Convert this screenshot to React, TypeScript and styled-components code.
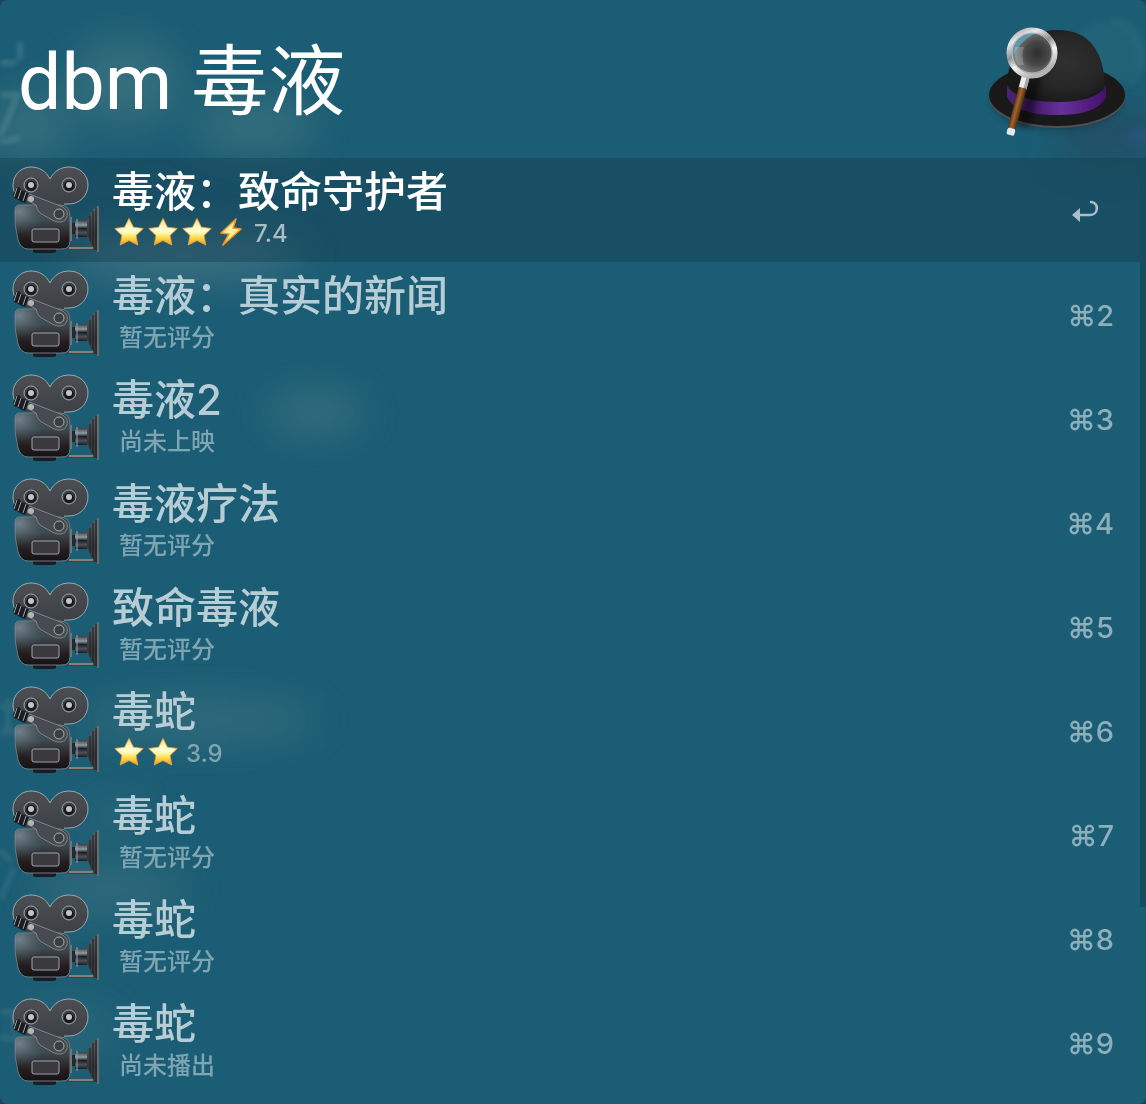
import React, { useState } from "react";
import styled, { createGlobalStyle } from "styled-components";

const GlobalStyle = createGlobalStyle`
  *, *::before, *::after { box-sizing: border-box; }
  body { margin: 0; background: #1e4556; }
`;

const Panel = styled.main`
  position: relative;
  isolation: isolate;
  display: flex;
  flex-direction: column;
  min-height: 100vh;
  padding-bottom: 10px;
  overflow: hidden;
  border-radius: 8px;
  font-family: Inter, "Noto Sans CJK SC", "DejaVu Sans", sans-serif;
  color: #fff;
  background: #1b5d74;
`;

const BackdropLeft = styled.svg`
  position: absolute;
  z-index: -1;
  top: 0;
  left: 0;
  width: 500px;
  height: 1104px;
`;

const BackdropRight = styled.svg`
  position: absolute;
  z-index: -1;
  top: 0;
  right: 0;
  width: 240px;
  height: 260px;
`;

const SearchBar = styled.header`
  display: flex;
  align-items: center;
  justify-content: space-between;
  height: 158px;
  padding: 0 20px 0 18px;
`;

const SearchInput = styled.input`
  flex: 1;
  min-width: 0;
  height: 120px;
  padding: 0 0 8px;
  border: 0;
  outline: 0;
  background: transparent;
  color: #fff;
  font-family: Roboto, "Noto Sans CJK SC", sans-serif;
  font-size: 77px;
  font-weight: 400;
`;

const HatSvg = styled.svg`
  flex: none;
  width: 140px;
  height: 116px;
`;

const ResultArea = styled.section`
  display: flex;
`;

const Results = styled.ul`
  display: flex;
  flex: 1;
  flex-direction: column;
  margin: 0;
  padding: 0;
  list-style: none;
`;

const ScrollTrack = styled.div`
  display: grid;
  grid-template-rows: 4fr 1fr;
  width: 6px;
`;

const ScrollThumb = styled.div`
  background: #174c60;
`;

const Row = styled.button<{ $selected: boolean }>`
  display: flex;
  align-items: center;
  width: 100%;
  height: 104px;
  padding: 0 26px 0 12px;
  gap: 12px;
  border: 0;
  text-align: left;
  font-family: inherit;
  cursor: pointer;
  color: ${(p) => (p.$selected ? "#fff" : "#b7cdd5")};
  background: ${(p) => (p.$selected ? "rgba(20, 56, 72, 0.36)" : "transparent")};
`;

const CameraSvg = styled.svg`
  flex: none;
  width: 88px;
  height: 88px;
`;

const Texts = styled.span`
  display: flex;
  flex: 1;
  flex-direction: column;
  min-width: 0;
`;

const Title = styled.span`
  font-size: 42px;
  font-weight: 500;
  line-height: 48px;
  white-space: nowrap;
`;

const Subtitle = styled.span<{ $selected: boolean }>`
  display: flex;
  align-items: center;
  height: 36px;
  font-size: 24px;
  font-weight: 500;
  line-height: 36px;
  white-space: nowrap;
  color: ${(p) => (p.$selected ? "#a9bdc5" : "#7fa5b2")};
`;

const Stars = styled.span`
  display: flex;
  gap: 4px;
  padding: 0 8px 4px 2px;
`;

const Note = styled.span`
  padding-left: 7px;
`;

const GlyphSvg = styled.svg`
  width: 30px;
  height: 30px;
`;

const Shortcut = styled.kbd`
  padding-top: 4px;
  font-family: Inter, "DejaVu Sans", sans-serif;
  font-size: 29px;
  font-weight: 500;
  line-height: 36px;
  color: #8dafbb;
`;

const ReturnSvg = styled.svg`
  width: 28px;
  height: 24px;
  margin-right: 14px;
`;

function Backdrop() {
  return (
    <>
      <BackdropLeft viewBox="0 0 500 1104" aria-hidden="true">
        <defs>
          <filter id="haze" filterUnits="userSpaceOnUse" x="-100" y="-100" width="700" height="1304">
            <feGaussianBlur stdDeviation="20" />
          </filter>
          <filter id="soft" filterUnits="userSpaceOnUse" x="-20" y="0" width="100" height="1104">
            <feGaussianBlur stdDeviation="2" />
          </filter>
        </defs>
        <g fill="#6f9493" opacity="0.32" filter="url(#haze)">
          <ellipse cx="125" cy="82" rx="56" ry="44" />
          <ellipse cx="30" cy="125" rx="40" ry="34" />
          <ellipse cx="255" cy="125" rx="62" ry="28" />
          <ellipse cx="315" cy="413" rx="50" ry="22" />
          <ellipse cx="200" cy="720" rx="120" ry="24" opacity="0.8" />
          <ellipse cx="115" cy="815" rx="40" ry="20" opacity="0.5" />
          <ellipse cx="110" cy="890" rx="80" ry="24" opacity="0.8" />
          <ellipse cx="70" cy="1030" rx="50" ry="30" opacity="0.5" />
        </g>
        <g fill="#80949f" opacity="0.38" filter="url(#haze)">
          <ellipse cx="185" cy="256" rx="120" ry="22" />
        </g>
        <g fill="none" stroke="#7fa5ac" strokeWidth="6" opacity="0.28" filter="url(#soft)">
          <path d="M0 63H16M20 42V60M0 95H18L0 136M0 142L20 138" />
          <path d="M0 707H14M8 698V730M0 732H18" opacity="0.6" />
          <path d="M0 850L12 862M14 868L0 900" opacity="0.6" />
          <path d="M0 1012H14V1030M0 1038H20" opacity="0.6" />
        </g>
      </BackdropLeft>
      <BackdropRight viewBox="0 0 240 260" aria-hidden="true">
        <defs>
          <filter id="hazeRight" x="-100%" y="-100%" width="300%" height="300%">
            <feGaussianBlur stdDeviation="18" />
          </filter>
          <filter id="softRight" x="-50%" y="-50%" width="200%" height="200%">
            <feGaussianBlur stdDeviation="4" />
          </filter>
        </defs>
        <ellipse cx="205" cy="135" rx="60" ry="28" fill="#26465d" opacity="0.6" filter="url(#hazeRight)" />
        <ellipse cx="240" cy="137" rx="22" ry="8" fill="#2f5587" opacity="0.55" filter="url(#softRight)" />
        <circle cx="202" cy="54" r="34" fill="#2b6a7c" opacity="0.45" filter="url(#softRight)" />
        <path d="M208 20c34 6 32 54 16 64" fill="none" stroke="#4d8592" strokeWidth="4" opacity="0.4" filter="url(#softRight)" />
      </BackdropRight>
    </>
  );
}

function Hat() {
  return (
    <HatSvg viewBox="0 0 140 116" role="img" aria-label="Alfred">
      <defs>
        <radialGradient id="dome" cx="0.6" cy="0.45" r="0.6">
          <stop offset="0" stopColor="#303030" />
          <stop offset="0.6" stopColor="#262626" />
          <stop offset="1" stopColor="#171717" />
        </radialGradient>
        <linearGradient id="ribbon" x1="0" x2="1">
          <stop offset="0" stopColor="#4a2270" />
          <stop offset="0.25" stopColor="#42196a" />
          <stop offset="0.55" stopColor="#67309a" />
          <stop offset="1" stopColor="#43106a" />
        </linearGradient>
        <linearGradient id="ring" x1="0" y1="0" x2="0.5" y2="1">
          <stop offset="0" stopColor="#9a9a9a" />
          <stop offset="0.25" stopColor="#e8e8e8" />
          <stop offset="0.5" stopColor="#8f8f8f" />
          <stop offset="0.7" stopColor="#f2f2f2" />
          <stop offset="1" stopColor="#b5b5b5" />
        </linearGradient>
        <radialGradient id="glass" cx="0.62" cy="0.5" r="0.55">
          <stop offset="0" stopColor="#2e2e2e" />
          <stop offset="0.5" stopColor="#484848" />
          <stop offset="1" stopColor="#808586" />
        </radialGradient>
        <linearGradient id="wood" x1="0" x2="1">
          <stop offset="0" stopColor="#5c3414" />
          <stop offset="0.4" stopColor="#a0662f" />
          <stop offset="1" stopColor="#4f2a0e" />
        </linearGradient>
        <filter id="shade" x="-30%" y="-30%" width="160%" height="160%">
          <feGaussianBlur stdDeviation="3" />
        </filter>
      </defs>
      <ellipse cx="71" cy="79" rx="66" ry="30" fill="#123542" opacity="0.6" filter="url(#shade)" />
      <ellipse cx="71" cy="76" rx="68" ry="31" fill="#505050" />
      <ellipse cx="71" cy="74" rx="68" ry="31" fill="#191919" />
      <path d="M21 66C22 30 40 9 72 9c30 0 46 20 47 57Q71 98 21 66z" fill="url(#dome)" />
      <path d="M21 64Q30 81 71 81T120 64V76Q112 94 71 94T21 76z" fill="url(#ribbon)" />
      <path d="M56 54L44 106 30 104 44 56z" fill="#000" opacity="0.45" filter="url(#shade)" />
      <g transform="rotate(15 46 32)">
        <rect x="42" y="56" width="8" height="13" fill="#ececec" />
        <rect x="47" y="56" width="3" height="13" fill="#a4a4a4" />
        <rect x="42" y="68" width="8" height="42" fill="url(#wood)" />
        <rect x="42" y="110" width="8" height="7" rx="2" fill="#e6e6e6" />
      </g>
      <circle cx="46" cy="32" r="22" fill="url(#glass)" />
      <path d="M27 35C25 20 36 11 52 11 42 16 33 22 27 35z" fill="#5f9aab" />
      <path d="M29 26h9q-3 8 0 18h-6q-5-9-3-18z" fill="#fff" opacity="0.2" />
      <circle cx="46" cy="32" r="23" fill="none" stroke="url(#ring)" strokeWidth="5" />
      <circle cx="46" cy="32" r="20" fill="none" stroke="#fff" strokeWidth="1" opacity="0.5" />
    </HatSvg>
  );
}

function Camera() {
  return (
    <CameraSvg viewBox="0 0 88 88" aria-hidden="true">
      <defs>
        <linearGradient id="body" x1="0" y1="0" x2="0" y2="1">
          <stop offset="0" stopColor="#3d464d" />
          <stop offset="0.35" stopColor="#3e4950" />
          <stop offset="0.75" stopColor="#241d1f" />
          <stop offset="1" stopColor="#151214" />
        </linearGradient>
        <radialGradient id="sheen" cx="0.08" cy="0.15" r="0.5">
          <stop offset="0" stopColor="#8799a2" stopOpacity="0.75" />
          <stop offset="1" stopColor="#566871" stopOpacity="0" />
        </radialGradient>
        <linearGradient id="reel" x1="0" y1="0" x2="0" y2="1">
          <stop offset="0" stopColor="#4b4e53" />
          <stop offset="1" stopColor="#3b3e43" />
        </linearGradient>
        <linearGradient id="lens" x1="0" y1="0" x2="0" y2="1">
          <stop offset="0" stopColor="#3b3e43" />
          <stop offset="0.3" stopColor="#8f9aa4" />
          <stop offset="0.5" stopColor="#1c1e23" />
          <stop offset="0.75" stopColor="#4a525c" />
          <stop offset="1" stopColor="#1c1a1c" />
        </linearGradient>
        <linearGradient id="hood" x1="0" y1="0" x2="0" y2="1">
          <stop offset="0" stopColor="#5a5e63" />
          <stop offset="0.6" stopColor="#37393d" />
          <stop offset="1" stopColor="#463a3a" />
        </linearGradient>
      </defs>
      <path d="M19 1c8 0 15 4 19 12C42 5 49 1 57 1c11 0 19 8 19 18S68 38 57 38h-5v5H28L12 36C5 33 1 27 1 19 1 9 9 1 19 1z" fill="url(#reel)" />
      <path d="M4 29C2 26 1 23 1 19 1 9 9 1 19 1c8 0 15 4 19 12C42 5 49 1 57 1c11 0 19 8 19 18S68 38 57 38h-5" fill="none" stroke="#9ba9b0" strokeWidth="1" />
      {[19, 57].map((x) => (
        <g key={x}>
          <circle cx={x} cy="19" r="7" fill="#3a3c40" stroke="#a1a8ad" strokeWidth="1" />
          <circle cx={x} cy="20" r="5" fill="#17181a" />
          <circle cx={x} cy="19" r="3" fill="#c3c6c8" />
        </g>
      ))}
      <path d="M57 81h29v3H55z" fill="#4c3c3e" />
      <path d="M57 82h28" stroke="#d0b9ba" strokeWidth="1" />
      <path d="M57 51h3v24h-3z" fill="#6d757b" />
      <path d="M60 57h4v11h-4z" fill="#24272b" />
      <rect x="63" y="54" width="12" height="17" rx="1" fill="url(#lens)" />
      <path d="M65 53v20" stroke="#9aa3aa" strokeWidth="1" />
      <path d="M75 54l3-4v-3l3-2v-2l6-3v46l-6-3v-3l-3-2v-4l-3-4z" fill="url(#hood)" />
      <path d="M78 50v25M81 45v35M84 42v42" stroke="#1b1d20" strokeWidth="1" />
      <path d="M86 40v46" stroke="#686c70" strokeWidth="2" />
      <path d="M21 82h23v4l-2 1H23l-2-1z" fill="#1b1c1f" />
      <path d="M8 39h40q10 0 10 11v25q0 8-8 8H16q-7 0-10-9Q2 59 3 44q0-5 5-5z" fill="url(#body)" stroke="#6d7a82" strokeWidth="1" />
      <path d="M8 39h40q10 0 10 11v25q0 8-8 8H16q-7 0-10-9Q2 59 3 44q0-5 5-5z" fill="url(#sheen)" />
      <rect x="20" y="63" width="27" height="13" rx="2" fill="#39393e" stroke="#a0a3a7" strokeWidth="1" />
      <path d="M17 28l34 13q7 5 3 12-4 5-12 2L28 47q-3-3-4-8l-9-5z" fill="#474a4f" stroke="#7d848a" strokeWidth="1" />
      <circle cx="47" cy="48" r="5" fill="#3a3d42" stroke="#a7adb1" strokeWidth="1" />
      <path d="M4 22l3-1 2 3 4 1 4 3-4 9-5-2-3-2-3-1-1-3z" fill="#1a1c20" />
      <path d="M5 22L2 31M9 24l-3 9M14 26l-3 9" stroke="#98a0a6" strokeWidth="1" />
      <circle cx="19" cy="33" r="3" fill="#b3b7ba" />
    </CameraSvg>
  );
}

function Star() {
  return (
    <GlyphSvg viewBox="0 0 30 30" aria-hidden="true">
      <defs>
        <linearGradient id="gold" x1="0" y1="0" x2="0" y2="1">
          <stop offset="0" stopColor="#fbd477" />
          <stop offset="0.3" stopColor="#fff7c4" />
          <stop offset="0.5" stopColor="#fffcd0" />
          <stop offset="0.7" stopColor="#ffe052" />
          <stop offset="1" stopColor="#f09a1c" />
        </linearGradient>
      </defs>
      <path d="M15 1.4L19.4 10.2 29.2 11.5 22 18.4 23.8 28 15 23.6 6.2 28 8 18.4 0.8 11.5 10.6 10.2z" fill="url(#gold)" stroke="#f0ab38" strokeWidth="0.8" strokeLinejoin="round" />
    </GlyphSvg>
  );
}

function Bolt() {
  return (
    <GlyphSvg viewBox="0 0 30 30" aria-hidden="true">
      <path d="M20 2L5 16l8 1L7 28 25 12l-8-1z" fill="#fff0a0" stroke="#f39a20" strokeWidth="1.6" strokeLinejoin="round" />
    </GlyphSvg>
  );
}

function ReturnArrow() {
  return (
    <ReturnSvg viewBox="0 0 28 24" role="img" aria-label="Return">
      <path d="M18 4h1c8 0 8 13-1 13H7" fill="none" stroke="#a9c0c9" strokeWidth="2.6" />
      <path d="M0 17l8-7v14z" fill="#a9c0c9" />
    </ReturnSvg>
  );
}

type Item = { title: string; note?: string; stars?: number; half?: boolean; score?: string };

const items: Item[] = [
  { title: "毒液：致命守护者", stars: 3, half: true, score: "7.4" },
  { title: "毒液：真实的新闻", note: "暂无评分" },
  { title: "毒液2", note: "尚未上映" },
  { title: "毒液疗法", note: "暂无评分" },
  { title: "致命毒液", note: "暂无评分" },
  { title: "毒蛇", stars: 2, score: "3.9" },
  { title: "毒蛇", note: "暂无评分" },
  { title: "毒蛇", note: "暂无评分" },
  { title: "毒蛇", note: "尚未播出" },
];

export default function App() {
  const [query, setQuery] = useState("dbm 毒液");
  const [selected, setSelected] = useState(0);
  return (
    <>
      <GlobalStyle />
      <Panel lang="zh-CN">
        <Backdrop />
        <SearchBar>
          <SearchInput
            aria-label="Search"
            spellCheck={false}
            value={query}
            onChange={(e) => setQuery(e.target.value)}
          />
          <Hat />
        </SearchBar>
        <ResultArea>
          <Results>
            {items.map((item, i) => (
              <li key={i}>
                <Row type="button" $selected={i === selected} onClick={() => setSelected(i)}>
                  <Camera />
                  <Texts>
                    <Title>{item.title}</Title>
                    <Subtitle $selected={i === selected}>
                      {item.stars ? (
                        <>
                          <Stars>
                            {Array.from({ length: item.stars }, (_, n) => (
                              <Star key={n} />
                            ))}
                            {item.half && <Bolt />}
                          </Stars>
                          {item.score}
                        </>
                      ) : (
                        <Note>{item.note}</Note>
                      )}
                    </Subtitle>
                  </Texts>
                  {i === selected ? <ReturnArrow /> : <Shortcut>⌘{i + 1}</Shortcut>}
                </Row>
              </li>
            ))}
          </Results>
          <ScrollTrack>
            <ScrollThumb />
          </ScrollTrack>
        </ResultArea>
      </Panel>
    </>
  );
}
